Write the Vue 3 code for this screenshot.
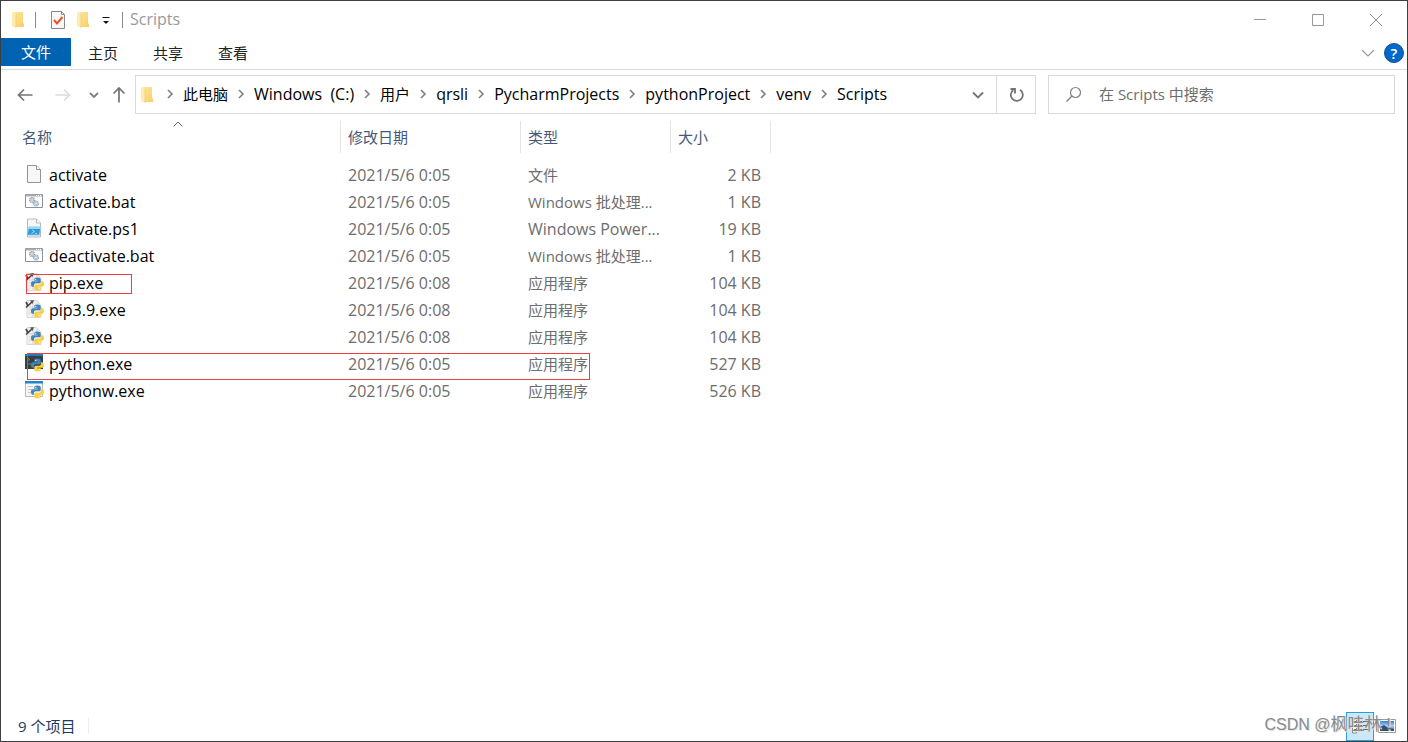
<script setup>
import { ref } from 'vue'

const tabs = ['主页', '共享', '查看']
const crumbs = ['此电脑', 'Windows\u00a0 (C:)', '用户', 'qrsli', 'PycharmProjects', 'pythonProject', 'venv', 'Scripts']
const query = ref('')
const isLatin = (text) => /^[\x20-\xff]+$/.test(text)
const files = [
  { name: 'activate', icon: 'blank', date: '2021/5/6 0:05', type: '文件', size: '2 KB' },
  { name: 'activate.bat', icon: 'batch', date: '2021/5/6 0:05', type: 'Windows 批处理...', size: '1 KB' },
  { name: 'Activate.ps1', icon: 'shell', date: '2021/5/6 0:05', type: 'Windows Power...', size: '19 KB' },
  { name: 'deactivate.bat', icon: 'batch', date: '2021/5/6 0:05', type: 'Windows 批处理...', size: '1 KB' },
  { name: 'pip.exe', icon: 'pip', date: '2021/5/6 0:08', type: '应用程序', size: '104 KB' },
  { name: 'pip3.9.exe', icon: 'pip', date: '2021/5/6 0:08', type: '应用程序', size: '104 KB' },
  { name: 'pip3.exe', icon: 'pip', date: '2021/5/6 0:08', type: '应用程序', size: '104 KB' },
  { name: 'python.exe', icon: 'console', date: '2021/5/6 0:05', type: '应用程序', size: '527 KB' },
  { name: 'pythonw.exe', icon: 'window', date: '2021/5/6 0:05', type: '应用程序', size: '526 KB' }
]
</script>

<template>
  <div class="explorer">
    <svg class="defs" aria-hidden="true">
      <defs>
        <linearGradient id="fold" x1="0" x2="1" y1="0" y2="1">
          <stop offset="0" stop-color="#ffe69b" /><stop offset="1" stop-color="#f9cf66" />
        </linearGradient>
        <linearGradient id="sky" x1="0" x2="0" y1="0" y2="1">
          <stop offset="0" stop-color="#2f7fd0" /><stop offset="0.5" stop-color="#a9d4f5" /><stop offset="1" stop-color="#2c5f7a" />
        </linearGradient>
        <symbol id="folder" viewBox="0 0 14 18">
          <path d="M3 1h9v11l1 1v3H3z" fill="url(#fold)" />
          <path d="M1 1l4 2v14l-4-2z" fill="#ffebae" />
          <path d="M5 3v14" stroke="#f0c75e" stroke-width="0.6" />
        </symbol>
        <symbol id="snake" viewBox="0 0 12 12">
          <path d="M5.900 0C3.600 0 3 .8 3 1.800V3h3.200v.5H1.600C.5 3.500 0 4.500 0 6s.6 2.600 1.500 2.600h1.200V7.200c0-1 .8-1.800 1.800-1.800h3c.8 0 1.500-.7 1.500-1.500V1.800C9 .7 8 0 5.900 0z" fill="#4484b6" />
          <path d="M6.100 12c2.300 0 2.900-.8 2.900-1.800V9H5.800v-.5h4.600C11.500 8.500 12 7.500 12 6s-.6-2.600-1.500-2.600H9.300v1.400c0 1-.8 1.800-1.800 1.800h-3C3.700 6.600 3 7.300 3 8.100v2.100C3 11.300 4 12 6.100 12z" fill="#fbcf3e" />
          <circle cx="4.400" cy="1.700" r=".6" fill="#fff" /><circle cx="7.600" cy="10.300" r=".6" fill="#fff" />
        </symbol>
      </defs>
    </svg>

    <header class="titlebar">
      <svg class="folder"><use href="#folder" /></svg>
      <i class="rule first"></i>
      <button class="plain check" aria-label="属性">
        <svg width="16" height="20" viewBox="0 0 16 20" fill="none">
          <path d="M1.500 1.500h10l3 3v14h-13z" fill="#f8f8f8" stroke="#8a8a8a" /><path d="M11.500 1.500v3h3" stroke="#8a8a8a" />
          <path d="M4 10l3 3.500L12.500 7" stroke="#e8561c" stroke-width="2" />
        </svg>
      </button>
      <button class="plain new" aria-label="新建文件夹"><svg class="folder"><use href="#folder" /></svg></button>
      <button class="plain more" aria-label="自定义快速访问工具栏">
        <svg width="8" height="8" viewBox="0 0 8 8"><path d="M.5.5h7" stroke="#111" /><path d="M1 4h6L4 7z" fill="#111" /></svg>
      </button>
      <i class="rule"></i>
      <span class="title latin">Scripts</span>
      <div class="controls">
        <button class="plain" aria-label="最小化"><svg width="14" height="14"><path d="M1 6.500h12" stroke="#999" /></svg></button>
        <button class="plain" aria-label="最大化"><svg width="14" height="14"><path d="M1.500 1.500h11v11h-11z" fill="none" stroke="#999" /></svg></button>
        <button class="plain" aria-label="关闭"><svg width="14" height="14"><path d="M1 1l12 12M13 1L1 13" stroke="#888" /></svg></button>
      </div>
    </header>

    <nav class="ribbon">
      <button class="plain file">文件</button>
      <button v-for="t in tabs" :key="t" class="plain tab">{{ t }}</button>
      <button class="plain expand" aria-label="展开功能区"><svg width="14" height="8"><path d="M1 1l6 6 6-6" fill="none" stroke="#999" stroke-width="1.200" /></svg></button>
      <button class="plain help" aria-label="帮助">?</button>
    </nav>

    <div class="navbar">
      <div class="arrows">
        <button class="plain" aria-label="后退"><svg width="16" height="14"><path d="M15.500 7H2M7 1.500L1.500 7 7 12.500" fill="none" stroke="#747474" stroke-width="1.700" /></svg></button>
        <button class="plain forward" aria-label="前进"><svg width="16" height="14"><path d="M.5 7H14M9 1.500L14.500 7 9 12.500" fill="none" stroke="#dcdcdc" stroke-width="1.700" /></svg></button>
        <button class="plain recent" aria-label="最近位置"><svg width="10" height="8"><path d="M1 2l4 4 4-4" fill="none" stroke="#808080" stroke-width="1.800" /></svg></button>
        <button class="plain up" aria-label="上移"><svg width="14" height="17"><path d="M7 16.500V2M1.500 7.500L7 2l5.500 5.500" fill="none" stroke="#747474" stroke-width="1.700" /></svg></button>
      </div>
      <div class="address">
        <svg class="folder"><use href="#folder" /></svg>
        <ol class="crumbs">
          <li v-for="c in crumbs" :key="c">
            <svg class="sep" width="7" height="10"><path d="M1 1l4 4-4 4" fill="none" stroke="#808080" stroke-width="1.600" /></svg>
            <button class="plain" :class="{ latin: isLatin(c) }">{{ c }}</button>
          </li>
        </ol>
        <button class="plain drop" aria-label="以前的位置"><svg width="12" height="8"><path d="M1 1.500l5 5 5-5" fill="none" stroke="#747474" stroke-width="1.800" /></svg></button>
        <button class="plain refresh" aria-label="刷新">
          <svg width="16" height="16" fill="none" stroke="#747474" stroke-width="1.800"><path d="M12 2.800A6 6 0 1 1 5.300 3" /><path d="M2.500 2h4.500v4.500" /></svg>
        </button>
      </div>
      <label class="search">
        <svg width="18" height="18" fill="none" stroke="#808080"><circle cx="10.500" cy="6.500" r="5" stroke-width="1.200" /><path d="M7 10L1.500 15.500" stroke-width="1.300" /></svg>
        <input v-model="query" type="text" placeholder="在 Scripts 中搜索" aria-label="在 Scripts 中搜索" />
      </label>
    </div>

    <main class="list">
      <table>
        <colgroup><col class="c-name" /><col class="c-date" /><col class="c-type" /><col class="c-size" /></colgroup>
        <thead>
          <tr>
            <th><button class="plain">名称</button>
              <svg class="sort" width="10" height="6"><path d="M.5 5.500L5 1l4.500 4.500" fill="none" stroke="#666" /></svg></th>
            <th><button class="plain">修改日期</button></th>
            <th><button class="plain">类型</button></th>
            <th><button class="plain">大小</button></th>
          </tr>
        </thead>
        <tbody>
          <tr v-for="f in files" :key="f.name">
            <td>
              <div class="name">
                <svg width="20" height="20" viewBox="0 1 20 20" fill="none">
                  <g v-if="f.icon === 'blank'">
                    <path d="M3.500 1.500h9l4 4v13h-13z" fill="#f7f7f7" stroke="#929292" /><path d="M12.500 1.500v4h4" fill="#fff" stroke="#929292" />
                  </g>
                  <g v-else-if="f.icon === 'batch'">
                    <path d="M1.500 3.500h17v13h-17z" fill="#fff" stroke="#8d9299" /><path d="M2 4.500h16" stroke="#a9afb7" stroke-width="2" />
                    <path d="M12 4.500h1M14 4.500h1M16 4.500h1" stroke="#fff" />
                    <circle cx="8" cy="9" r="2.400" fill="#eee" stroke="#9a9a9a" stroke-width="1.400" stroke-dasharray="1.300 .6" /><circle cx="8" cy="9" r="1.300" stroke="#aaa" stroke-width=".6" />
                    <circle cx="12" cy="12.500" r="2.400" fill="#eaf3fa" stroke="#8aa9c4" stroke-width="1.400" stroke-dasharray="1.300 .6" /><circle cx="12" cy="12.500" r="1.300" stroke="#8db0cc" stroke-width=".6" />
                  </g>
                  <g v-else-if="f.icon === 'shell'">
                    <path d="M3.500 1h9l4 4v14h-13z" fill="#f6f6f6" stroke="#b9b9b9" /><path d="M12.500 1v4h4" fill="#fff" stroke="#b9b9b9" />
                    <path d="M5 9h12l-1.600 8H3z" fill="#2f9ad6" stroke="#86c8ec" /><path d="M5 9h12l-.4 2H4.600z" fill="#9dd6f4" />
                    <path d="M8 12l2.500 1.500L7.500 15.500M11 15.500h2" stroke="#bfe6f8" stroke-width=".8" />
                  </g>
                  <g v-else-if="f.icon === 'pip'">
                    <path d="M3 1.500h10l4 5v12H3z" fill="#eef0f1" stroke="#d5d8da" /><path d="M5 8h4M5 11h3M5 14h3M9 2v16M13 3v6" stroke="#d3d6d8" />
                    <path d="M8.500 2.500L2 8.500M4 7L2 3" stroke="#444" stroke-width="1.700" /><path d="M6 1.500l4-.500-1.500 4z" fill="#555" />
                    <use href="#snake" x="7" y="5" width="13" height="14" />
                  </g>
                  <g v-else-if="f.icon === 'console'">
                    <path d="M1 1h18v15H1z" fill="#373f43" /><path d="M1 1h18v2H1z" fill="#287cb8" />
                    <path d="M3 5l3 1.500L3 8M3 11h4" stroke="#50916a" />
                    <use href="#snake" x="7" y="5" width="13" height="14" />
                  </g>
                  <g v-else>
                    <path d="M1.500 2v14.500h17V2" fill="#f5f5f5" stroke="#b4bcc2" /><path d="M1 1h18v2.500H1z" fill="#1687d0" />
                    <path d="M4 6.500h5M4 9.500h4M4 12.500h3" stroke="#c4c9cc" />
                    <use href="#snake" x="7" y="5" width="13" height="14" />
                  </g>
                </svg>
                <span class="latin">{{ f.name }}</span>
              </div>
            </td>
            <td class="latin">{{ f.date }}</td>
            <td :class="{ latin: isLatin(f.type) }">{{ f.type }}</td>
            <td class="size latin">{{ f.size }}</td>
          </tr>
        </tbody>
      </table>
      <div class="mark mark-pip"></div>
      <div class="mark mark-python"></div>
    </main>

    <footer class="status">
      <span class="count">9 个项目</span>
      <div class="views">
        <button class="plain view active" aria-label="详细信息">
          <svg width="18" height="16" fill="none"><path d="M1.500 1v14h4V1z" fill="#fff" stroke="#8a8a8a" /><path d="M3 3h2v2H3z" fill="#508a50" /><path d="M3 7h2v2H3z" fill="#3577b5" /><path d="M3 11h2v2H3z" fill="#c33b30" /><path d="M7 3.500h4M12 3.500h5M7 7.500h4M12 7.500h5M7 11.500h4M12 11.500h5" stroke="#636b70" /></svg>
        </button>
        <button class="plain view" aria-label="大缩略图">
          <svg width="18" height="14"><path d="M.5.5h17v13H.5z" fill="#fff" stroke="#999" /><path d="M2 2h14v10H2z" fill="url(#sky)" /><path d="M2 8l4-2 4 3 6 1v2H2z" fill="#31546b" /></svg>
        </button>
      </div>
      <span class="watermark">CSDN @<span class="author">枫哇林 !</span></span>
    </footer>
  </div>
</template>

<style>
body { margin: 0; }
</style>

<style scoped>
* { box-sizing: border-box; }
.explorer {
  position: relative;
  display: flex;
  flex-direction: column;
  min-height: 100vh;
  border: 1px solid #3f3f41;
  background: #fff;
  color: #000;
  font-family: "Open Sans", "Noto Sans CJK SC", sans-serif;
  font-size: 15px;
  line-height: 20px;
}
.defs { position: absolute; width: 0; height: 0; }
.plain {
  display: flex;
  align-items: center;
  justify-content: center;
  margin: 0;
  padding: 0;
  border: 0;
  background: none;
  color: inherit;
  font: inherit;
}
.explorer .latin { font-size: 16px; }
.folder { width: 14px; height: 18px; flex: none; }

.titlebar { display: flex; align-items: center; height: 37px; padding-left: 10px; }
.rule { width: 1px; height: 16px; background: #8a8a8a; }
.rule.first { margin: 0 14px 0 10px; }
.check { margin-right: 10px; }
.more { margin: 2px 12px 0 12px; }
.title { margin-left: 7px; padding-bottom: 2px; color: #999; }
.controls { display: flex; margin: 0 2px 0 auto; }
.controls .plain { width: 58px; height: 35px; }

.ribbon { display: flex; height: 32px; padding-right: 3px; border-bottom: 1px solid #d9dadb; }
.file { width: 70px; height: 28px; background: #0063b1; color: #fff; }
.tab { width: 65px; height: 30px; padding-right: 1px; color: #222; }
.expand { width: 26px; height: 30px; margin-left: auto; }
.help {
  width: 20px;
  height: 20px;
  margin: 5px 0 0 3px;
  border: 1px solid #1c4f86;
  border-radius: 50%;
  background: #0068cb;
  color: #fff;
  font-weight: 600;
  line-height: 16px;
}

.navbar { display: flex; height: 44px; padding: 5px 12px 0 16px; }
.arrows { display: flex; align-items: center; width: 118px; height: 39px; flex: none; }
.forward { margin-left: 22px; }
.recent { margin-left: 18px; }
.up { margin-left: 13px; }
.address { display: flex; flex: 895 1 0; align-items: center; height: 39px; padding-left: 4px; border: 1px solid #d9d9d9; }
.crumbs { display: flex; flex: 1; margin: 0 0 0 3px; padding: 0 0 2px; list-style: none; white-space: nowrap; }
.crumbs li { display: flex; align-items: center; }
.sep { margin: 0 9px 0 10px; }
.drop { width: 36px; height: 37px; }
.refresh { width: 39px; height: 37px; border-left: 1px solid #d9d9d9; }
.search { display: flex; flex: 329 1 0; align-items: center; height: 39px; margin-left: 12px; padding-left: 16px; border: 1px solid #d9d9d9; }
.search svg { flex: none; }
.search input { flex: 1; min-width: 0; margin-left: 16px; padding: 0 0 2px; border: 0; outline: 0; background: none; color: #666; font: inherit; }
.search input::placeholder { color: #6d6d6d; opacity: 1; }

.list { position: relative; flex: 1; padding-top: 7px; }
table { width: 770px; table-layout: fixed; border-collapse: separate; border-spacing: 0; }
.c-name { width: 340px; }
.c-date { width: 180px; }
.c-type { width: 150px; }
.c-size { width: 100px; }
th { position: relative; height: 32px; padding: 0 0 0 7px; border-right: 1px solid #e3e3e3; color: #44597a; font-weight: 400; text-align: left; vertical-align: middle; }
th:first-child { padding-left: 21px; }
.sort { position: absolute; top: 0; left: 172px; }
tbody::before { display: block; height: 8px; content: ""; }
td { height: 27px; padding: 0 0 0 7px; color: #6d6d6d; white-space: nowrap; }
td:first-child { padding-left: 23px; color: #000; }
td.size { padding: 0 10px 0 0; text-align: right; }
.name { display: flex; align-items: center; gap: 5px; }
.name svg { overflow: visible; }
.mark { position: absolute; border: 1px solid #ed3f3f; pointer-events: none; }
.mark-pip { top: 160px; left: 25px; width: 106px; height: 20px; }
.mark-python { top: 239px; left: 26px; width: 563px; height: 27px; }

.status { position: relative; display: flex; align-items: center; height: 30px; padding: 0 7px 0 17px; color: #1e395b; }
.count { padding-right: 13px; border-right: 1px solid #ededed; line-height: 16px; }
.views { display: flex; margin-left: auto; }
.view { width: 26px; height: 29px; }
.view.active { width: 28px; border: 1px solid #26a0da; background: #cbe8f6; }
.watermark {
  position: absolute;
  right: 16px;
  bottom: 6px;
  color: #8b8b8b;
  font-family: "Liberation Sans", "Noto Sans CJK SC", sans-serif;
  font-size: 16px;
  text-shadow: 1px 1px 0 #e2e2e2;
  pointer-events: none;
}
.author { font-size: 17px; }
</style>
